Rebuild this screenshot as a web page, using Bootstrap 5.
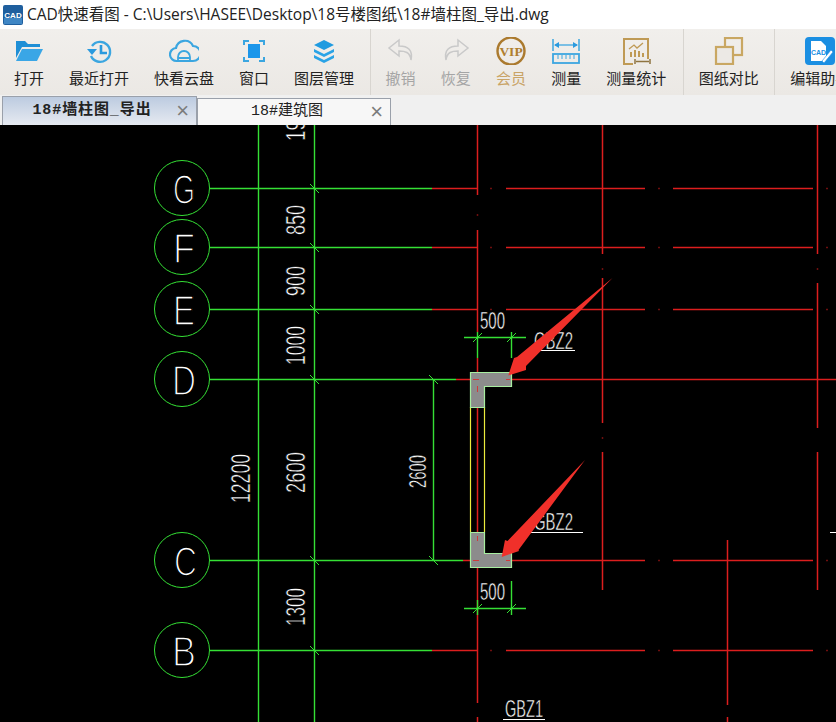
<!DOCTYPE html>
<html lang="zh-CN">
<head>
<meta charset="UTF-8">
<title>CAD快速看图</title>
<link href="https://cdn.jsdelivr.net/npm/bootstrap@5.3.0/dist/css/bootstrap.min.css" rel="stylesheet">
<style>
  html, body { margin: 0; background: #000; }
  .app-frame { width: 836px; height: 722px; overflow: hidden; font-family: "Open Sans", "Noto Sans CJK SC", sans-serif; }
  .title-bar { height: 29px; background: #fff; padding-left: 3px; gap: 4px; font-size: 15.5px; color: #222; white-space: nowrap; }
  .tool-bar { height: 66px; background: linear-gradient(#f1efec, #ebe8e4); padding-left: 14px; overflow: hidden; }
  .tool-group { gap: 25px; padding-right: 15.5px; flex: none; }
  .tool-group + .tool-group { border-left: 1px solid #d8d5d0; padding-left: 15px; }
  .tool-wide { gap: 25.2px; padding-right: 16.5px; }
  .tool-btn { flex: none; text-align: center; font-size: 15px; line-height: 20px; color: #222; white-space: nowrap; }
  .tool-btn svg { display: block; margin: 8px auto 3px; width: 30px; height: 28px; }
  .tool-off { color: #a5a5a5; }
  .tool-gold { color: #c9a467; }
  .tab-strip { height: 30px; background: #f0f0f0; padding-left: 2px; border: 0; align-items: flex-end; }
  .tab-strip .nav-link { position: relative; display: block; margin: 0; padding: 0; border: 1px solid #9aa0aa; border-bottom: 0; border-radius: 0; color: #222; text-align: center; font-family: "Liberation Mono", "Noto Sans CJK SC", monospace; white-space: nowrap; }
  .tab-strip .tab-on { width: 195px; height: 29px; line-height: 28px; font-size: 15px; font-weight: 700; letter-spacing: .9px; padding-right: 15px; background: linear-gradient(#bccbe0, #e6eaf1); }
  .tab-strip .tab-off { width: 194px; height: 27px; line-height: 26px; font-size: 15px; background: #f7f7f7; padding-right: 14px; }
  .tab-x { position: absolute; right: 7px; top: 0; font-family: "Liberation Sans", sans-serif; font-size: 22px; font-weight: 400; letter-spacing: 0; color: #7c7c7c; }
  .cad-view { display: block; width: 836px; height: 597px; background: #000; }
  .cad-view text { fill: #fff; font-family: "Liberation Sans", sans-serif; stroke: #000; }
  .dim-big { font-size: 28px; stroke-width: .6px; }
  .dim-small { font-size: 24px; stroke-width: .5px; }
  .axis-tag { font-size: 42px; stroke-width: 1.7px; }
</style>
</head>
<body>
<div class="app-frame">
  <div class="title-bar d-flex align-items-center">
    <svg width="20" height="20" viewBox="0 0 20 20"><rect width="20" height="20" rx="2" fill="#1f5f9e"/><rect x="1" y="13" width="18" height="6" fill="#3f86c4"/><text x="10" y="13" text-anchor="middle" font-family="Liberation Sans" font-size="8" font-weight="700" fill="#fff">CAD</text></svg>
    <span>CAD快速看图 - C:\Users\HASEE\Desktop\18号楼图纸\18#墙柱图_导出.dwg</span>
  </div>

  <div class="tool-bar d-flex">
    <div class="tool-group d-flex">
      <div class="tool-btn">
        <svg viewBox="0 0 30 28"><path d="M2 4h9l3 3h12v3H8L2 21z" fill="#1f8fd6"/><path d="M8 12h21l-6 12H2z" fill="#3aa6e6"/></svg>
        打开</div>
      <div class="tool-btn" style="width:60px">
        <svg viewBox="0 0 30 28"><path d="M8 9a10 10 0 1 1-1 10" fill="none" stroke="#3ba6e0" stroke-width="2.4"/><path d="M3 12h10l-5 6z" fill="#2a9ade"/><path d="M17 8v8h6" fill="none" stroke="#2a9ade" stroke-width="2.6"/></svg>
        最近打开</div>
      <div class="tool-btn" style="width:60px">
        <svg viewBox="0 0 30 28"><path d="M8 24a6.500 6.500 0 0 1-1-13 9 9 0 0 1 17-2 7.500 7.500 0 0 1 0 15z" fill="none" stroke="#3ba6e0" stroke-width="2.200"/><path d="M9 24v-4a6 6 0 0 1 12 0v4M9 21h12" fill="none" stroke="#3ba6e0" stroke-width="1.800"/></svg>
        快看云盘</div>
      <div class="tool-btn">
        <svg viewBox="0 0 30 28"><rect x="9" y="7" width="12" height="14" fill="#1b96ea"/><path d="M5 8V4h5M20 4h5v4M25 20v4h-5M10 24H5v-4" fill="none" stroke="#3ba6e0" stroke-width="2"/></svg>
        窗口</div>
      <div class="tool-btn" style="width:60px">
        <svg viewBox="0 0 30 28"><path d="M15 3l10 5-10 5-10-5z" fill="#1f9be0"/><path d="M5 12l10 5 10-5v3l-10 5-10-5z" fill="#2aa3e6"/><path d="M5 18l10 5 10-5v3l-10 5-10-5z" fill="#2aa3e6"/></svg>
        图层管理</div>
    </div>
    <div class="tool-group tool-wide d-flex">
      <div class="tool-btn tool-off">
        <svg viewBox="0 0 30 28"><path d="M13 3L3 11l10 8v-5c6 0 11 1 12 9 2-10-3-14-12-14z" fill="none" stroke="#c9c9c9" stroke-width="1.500"/></svg>
        撤销</div>
      <div class="tool-btn tool-off">
        <svg viewBox="0 0 30 28"><path d="M17 3l10 8-10 8v-5c-6 0-11 1-12 9-2-10 3-14 12-14z" fill="none" stroke="#c9c9c9" stroke-width="1.500"/></svg>
        恢复</div>
      <div class="tool-btn tool-gold">
        <svg viewBox="0 0 30 28"><circle cx="15" cy="14" r="13.500" fill="none" stroke="#ab7a2e" stroke-width="2.400"/><text x="15" y="18.500" text-anchor="middle" font-family="Liberation Serif" font-size="13.500" font-weight="700" fill="#b07f2e">VIP</text></svg>
        会员</div>
      <div class="tool-btn">
        <svg viewBox="0 0 30 28"><path d="M2 2v12M28 2v12" stroke="#3ba6e0" stroke-width="1.500"/><path d="M4 8h22" stroke="#3ba6e0" stroke-width="1.300"/><path d="M3 8l5-3v6zM27 8l-5-3v6z" fill="#2a9ade"/><rect x="2" y="17" width="26" height="9" fill="none" stroke="#3ba6e0" stroke-width="1.800"/><path d="M7 18v4M11 18v4M15 18v4M19 18v4M23 18v4" stroke="#3ba6e0"/></svg>
        测量</div>
      <div class="tool-btn" style="width:60px">
        <svg viewBox="0 0 30 28"><path d="M27 22V2H3v25h9" fill="none" stroke="#bf9a55" stroke-width="2"/><path d="M8 12l5-4 3 3 6-5" fill="none" stroke="#bf9a55" stroke-width="1.300"/><path d="M9 15h2v5H9zM13 13h2v7h-2zM17 14h2v6h-2zM21 16h2v4h-2z" fill="#bf9a55"/><path d="M14 22v5M29 22v5M15 24.500h13" stroke="#8f7440" stroke-width="1.500"/></svg>
        测量统计</div>
    </div>
    <div class="tool-group d-flex">
      <div class="tool-btn" style="width:60px">
        <svg viewBox="0 0 30 28"><rect x="11" y="1" width="17" height="17" fill="none" stroke="#c9a762" stroke-width="2.200"/><rect x="2" y="10" width="17" height="17" fill="#ece9e5" stroke="#c9a762" stroke-width="2.200"/></svg>
        图纸对比</div>
    </div>
    <div class="tool-group d-flex">
      <div class="tool-btn" style="width:60px">
        <svg viewBox="0 0 30 28"><rect x="0" y="0" width="30" height="28" rx="4" fill="#1b8fe2"/><path d="M6 4h10l5 5v15H6z" fill="#fff"/><text x="13.500" y="18" text-anchor="middle" font-family="Liberation Sans" font-size="7" font-weight="700" fill="#1b8fe2">CAD</text><path d="M17 24l9-11 2 2-9 11z" fill="#fff" stroke="#1b8fe2" stroke-width=".6"/></svg>
        编辑助手</div>
    </div>
  </div>

  <ul class="nav nav-tabs tab-strip">
    <li class="nav-item"><a class="nav-link tab-on" href="#">18#墙柱图_导出<span class="tab-x">×</span></a></li>
    <li class="nav-item"><a class="nav-link tab-off" href="#">18#建筑图<span class="tab-x">×</span></a></li>
  </ul>

  <svg class="cad-view" viewBox="0 125 836 597">
    <!-- red grid, with the gaps where columns were hidden -->
    <g stroke="#dc1e1e" stroke-width="1.500" fill="none">
      <path d="M432 188.500H478M506 188.500H645M673 188.500H813M432 247.500H478M506 247.500H645M673 247.500H813M432 309.500H478M506 309.500H645M673 309.500H813M432 650.500H478M506 650.500H645M673 650.500H813"/>
      <path d="M456 379.500H471M512 379.500H836M463 560.500H471M512 560.500H645M673 560.500H813"/>
      <path d="M477.500 125V195M477.500 230V332M477.500 358V372M477.500 407V532M477.500 568V703M477.500 717V722"/>
      <path d="M602.500 125V254M602.500 278V423M602.500 452V590"/>
      <path d="M817.500 125V254M817.500 283V428M817.500 452V590"/>
      <path d="M727.500 540V705M727.500 717V722"/>
      <path d="M490 188.500h2M658 188.500h2M826 188.500h2M490 247.500h2M658 247.500h2M826 247.500h2M490 309.500h2M658 309.500h2M826 309.500h2M658 560.500h2M826 560.500h2M490 650.500h2M658 650.500h2M826 650.500h2M602.500 268v2M817.500 268v2M602.500 437v2M477.500 214v2" opacity=".5"/>
    </g>
    <!-- column outlines -->
    <g stroke="#ecec3c" stroke-width="1.200">
      <path d="M470.500 407V532M484.500 407V532"/>
    </g>
    <g fill="#8c8c8c" stroke="#a8eea0" stroke-width="1.200">
      <path d="M470.500 372.500H511.500V386.500H484.500V407.500H470.500Z"/>
      <path d="M470.500 532.500H484.500V553.500H511.500V567.500H470.500Z"/>
    </g>
    <g stroke="#d03a3a">
      <path d="M473 379.500h6M477.500 386v6M506 379.500h4M473 560.500h6M477.500 536v5M506 560.500h4"/>
    </g>
    <!-- green axes and dimension lines -->
    <g stroke="#35e035" stroke-width="1.400" fill="none">
      <path d="M258.500 125V722M314.500 125V722M433.500 379V561"/>
      <path d="M210 188.500H432M210 247.500H432M210 309.500H432M210 379.500H456M210 560.500H463M210 650.500H432"/>
      <path d="M464 337.500H526M477.500 332V358M511.500 332V358M464 608.500H526M511.500 581V615M477.500 600V615"/>
      <g stroke-width="1">
        <path d="M310 184l9 9M310 243l9 9M310 305l9 9M310 375l9 9M310 556l9 9M310 646l9 9M429 375l9 9M429 556l9 9"/>
        <path d="M473 342l9-9M507 342l9-9M473 613l9-9M507 613l9-9"/>
        <circle cx="182" cy="188" r="27.500"/>
        <circle cx="182" cy="247" r="27.500"/>
        <circle cx="182" cy="309" r="27.500"/>
        <circle cx="182" cy="379" r="27.500"/>
        <circle cx="182" cy="560" r="27.500"/>
        <circle cx="182" cy="650" r="27.500"/>
      </g>
    </g>
    <!-- underlines -->
    <g stroke="#fff" stroke-width="1.200">
      <path d="M535 350.500H575M528 532.500H583M503 719.500H545M830 532.500H836"/>
    </g>
    <!-- axis letters -->
    <text class="axis-tag" x="173" y="204" textLength="22" lengthAdjust="spacingAndGlyphs">G</text>
    <text class="axis-tag" x="173" y="263" textLength="22" lengthAdjust="spacingAndGlyphs">F</text>
    <text class="axis-tag" x="173" y="325" textLength="22" lengthAdjust="spacingAndGlyphs">E</text>
    <text class="axis-tag" x="172" y="395" textLength="24" lengthAdjust="spacingAndGlyphs">D</text>
    <text class="axis-tag" x="174" y="576" textLength="23" lengthAdjust="spacingAndGlyphs">C</text>
    <text class="axis-tag" x="172" y="666" textLength="24" lengthAdjust="spacingAndGlyphs">B</text>
    <!-- dimension numbers -->
    <text class="dim-big" transform="translate(305 141) rotate(-90)" textLength="42" lengthAdjust="spacingAndGlyphs">1900</text>
    <text class="dim-big" transform="translate(305 235) rotate(-90)" textLength="30" lengthAdjust="spacingAndGlyphs">850</text>
    <text class="dim-big" transform="translate(305 296) rotate(-90)" textLength="30" lengthAdjust="spacingAndGlyphs">900</text>
    <text class="dim-big" transform="translate(305 365) rotate(-90)" textLength="39" lengthAdjust="spacingAndGlyphs">1000</text>
    <text class="dim-big" transform="translate(305 493) rotate(-90)" textLength="41" lengthAdjust="spacingAndGlyphs">2600</text>
    <text class="dim-big" transform="translate(305 626) rotate(-90)" textLength="38" lengthAdjust="spacingAndGlyphs">1300</text>
    <text class="dim-big" transform="translate(249.500 503) rotate(-90)" textLength="49" lengthAdjust="spacingAndGlyphs">12200</text>
    <text class="dim-small" transform="translate(426 488) rotate(-90)" textLength="33" lengthAdjust="spacingAndGlyphs">2600</text>
    <text class="dim-small" x="480" y="329" textLength="25" lengthAdjust="spacingAndGlyphs">500</text>
    <text class="dim-small" x="480" y="600" textLength="25" lengthAdjust="spacingAndGlyphs">500</text>
    <text class="dim-small" x="534" y="349" textLength="39" lengthAdjust="spacingAndGlyphs">GBZ2</text>
    <text class="dim-small" x="534" y="530" textLength="39" lengthAdjust="spacingAndGlyphs">GBZ2</text>
    <text class="dim-small" x="505" y="717" textLength="38" lengthAdjust="spacingAndGlyphs">GBZ1</text>
    <!-- red arrows drawn over the drawing -->
    <path d="M612.500 278L526 366 526 370 508.300 375.500 514 358 517 357Z" fill="#f0302a"/>
    <path d="M585 460L518.500 550 519 551 501.700 557 505 540 507.500 541Z" fill="#f0302a"/>
  </svg>
</div>
<script src="https://cdn.jsdelivr.net/npm/bootstrap@5.3.0/dist/js/bootstrap.bundle.min.js"></script>
</body>
</html>
